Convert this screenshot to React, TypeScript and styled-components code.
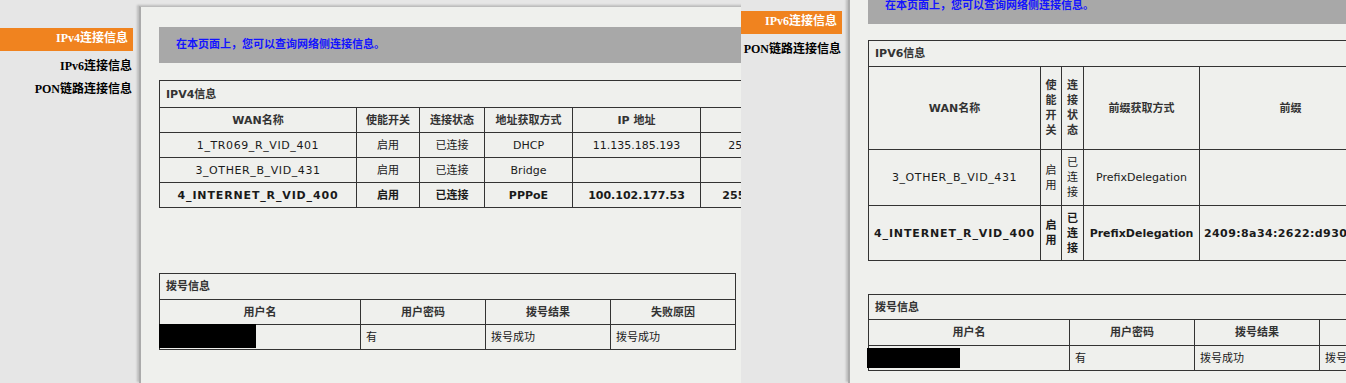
import React from 'react';
import styled, { createGlobalStyle } from 'styled-components';

const Global = createGlobalStyle`
  html, body { margin: 0; padding: 0; }
  body {
    background: #e6e6e6;
    font-family: "DejaVu Sans", "Noto Sans CJK SC", sans-serif;
  }
`;

const Screen = styled.div`
  display: flex;
  width: 1346px;
  height: 383px;
  overflow: hidden;
`;

const Shot = styled.section<{ $width?: number }>`
  display: flex;
  flex: ${p => (p.$width ? `0 0 ${p.$width}px` : '1 1 auto')};
  min-width: 0;
  height: 100%;
  overflow: hidden;
  background: #e6e6e6;
`;

const Sidebar = styled.nav<{ $width: number; $top: number }>`
  flex: 0 0 ${p => p.$width}px;
  box-sizing: border-box;
  padding-top: ${p => p.$top}px;
  display: flex;
  flex-direction: column;
  background: #e6e6e6;
`;

const NavItem = styled.div<{ $active?: boolean }>`
  width: calc(100% - 6px);
  height: 23px;
  line-height: 23px;
  box-sizing: border-box;
  text-align: right;
  white-space: nowrap;
  overflow: hidden;
  padding-right: ${p => (p.$active ? 5 : 1)}px;
  margin-bottom: ${p => (p.$active ? 5 : 0)}px;
  background: ${p => (p.$active ? '#f0831f' : 'transparent')};
  color: ${p => (p.$active ? '#ffffff' : '#000000')};
  font: bold 12px "Liberation Serif", "Noto Sans CJK SC", serif;
`;

const Frame = styled.main<{ $top: number }>`
  flex: 0 0 960px;
  margin-top: ${p => p.$top}px;
  padding-left: 18px;
  background: #eff0ed;
  border-left: 2px solid #ababab;
  border-top: ${p => (p.$top > 0 ? '1px solid #bdbdbd' : '0')};
  box-shadow: -2px -1px 2px rgba(0, 0, 0, 0.18);
`;

const Scroller = styled.div<{ $shift: number }>`
  display: flex;
  flex-direction: column;
  margin-top: ${p => p.$shift}px;
`;

const Banner = styled.div`
  width: 900px;
  height: 36px;
  line-height: 36px;
  padding-left: 17px;
  box-sizing: border-box;
  background: #a8a8a8;
  color: #1414ff;
  font-size: 11px;
  font-weight: bold;
  white-space: nowrap;
`;

const Table = styled.table<{ $width: number; $gap: number }>`
  border-collapse: collapse;
  table-layout: fixed;
  width: ${p => p.$width}px;
  margin-top: ${p => p.$gap}px;
  background: #eff0ed;
  font-size: 11px;
  line-height: 15px;
  color: #1a1a1a;
  border: 1px solid #333;
`;

const Col = styled.col<{ $w: number }>`
  width: ${p => p.$w}px;
`;

const Row = styled.tr<{ $h: number; $bold?: boolean }>`
  height: ${p => p.$h}px;
  font-weight: ${p => (p.$bold ? 'bold' : 'normal')};
`;

const TitleCell = styled.td`
  border: 1px solid #333;
  padding: 0 6px;
  text-align: left;
  font-weight: bold;
  color: #333;
  white-space: nowrap;
`;

const HeadCell = styled.th<{ $tight?: boolean }>`
  border: 1px solid #333;
  padding: ${p => (p.$tight ? '0' : '0 4px')};
  text-align: center;
  font-weight: bold;
  color: #333;
  overflow: hidden;
  word-break: break-all;
`;

const Cell = styled.td<{ $align?: 'left' | 'center'; $tight?: boolean; $nowrap?: boolean; $spacing?: number }>`
  border: 1px solid #333;
  padding: ${p => (p.$tight ? '0' : p.$align === 'left' ? '0 5px' : '0 4px')};
  text-align: ${p => p.$align || 'center'};
  overflow: hidden;
  white-space: ${p => (p.$nowrap ? 'nowrap' : 'normal')};
  word-break: break-all;
  letter-spacing: ${p => p.$spacing || 0}px;
`;

const RedactCell = styled.td`
  border: 1px solid #333;
  padding: 0;
  vertical-align: top;
`;

const Redact = styled.div<{ $w: number; $h: number; $dx: number; $dy: number }>`
  position: relative;
  width: ${p => p.$w}px;
  height: ${p => p.$h}px;
  margin-left: ${p => p.$dx}px;
  margin-top: ${p => p.$dy}px;
  background: #000;
`;

type ConnRow = { bold?: boolean; h: number; cells: string[] };

type ConnTable = {
  title: string;
  cols: number[];
  tight: number[];
  heads: string[];
  headH: number;
  titleH: number;
  rows: ConnRow[];
  gap: number;
  spacing: Record<number, [number, number]>;
};

const ConnectionTable: React.FC<{ t: ConnTable }> = ({ t }) => {
  const total = t.cols.reduce((a, b) => a + b, 0);
  return (
    <Table $width={total} $gap={t.gap}>
      <colgroup>
        {t.cols.map((w, i) => (
          <Col key={i} $w={w} />
        ))}
      </colgroup>
      <tbody>
        <Row $h={t.titleH}>
          <TitleCell colSpan={t.cols.length}>{t.title}</TitleCell>
        </Row>
        <Row $h={t.headH}>
          {t.heads.map((h, i) => (
            <HeadCell key={i} $tight={t.tight.includes(i)}>
              {h}
            </HeadCell>
          ))}
        </Row>
        {t.rows.map((r, ri) => (
          <Row key={ri} $h={r.h} $bold={r.bold}>
            {r.cells.map((c, i) => (
              <Cell
                key={i}
                $tight={t.tight.includes(i)}
                $nowrap={!t.tight.includes(i)}
                $spacing={t.spacing[i] ? t.spacing[i][r.bold ? 1 : 0] : 0}
              >
                {c}
              </Cell>
            ))}
          </Row>
        ))}
      </tbody>
    </Table>
  );
};

type Dial = {
  gap: number;
  titleH: number;
  headH: number;
  rowH: number;
  redact: { w: number; h: number; dx: number; dy: number };
};

const DialTable: React.FC<{ d: Dial }> = ({ d }) => {
  const cols = [201, 125, 125, 125];
  return (
    <Table $width={576} $gap={d.gap}>
      <colgroup>
        {cols.map((w, i) => (
          <Col key={i} $w={w} />
        ))}
      </colgroup>
      <tbody>
        <Row $h={d.titleH}>
          <TitleCell colSpan={4}>拨号信息</TitleCell>
        </Row>
        <Row $h={d.headH}>
          <HeadCell>用户名</HeadCell>
          <HeadCell>用户密码</HeadCell>
          <HeadCell>拨号结果</HeadCell>
          <HeadCell>失败原因</HeadCell>
        </Row>
        <Row $h={d.rowH}>
          <RedactCell>
            <Redact $w={d.redact.w} $h={d.redact.h} $dx={d.redact.dx} $dy={d.redact.dy} />
          </RedactCell>
          <Cell $align="left">有</Cell>
          <Cell $align="left">拨号成功</Cell>
          <Cell $align="left">拨号成功</Cell>
        </Row>
      </tbody>
    </Table>
  );
};

const ipv4: ConnTable = {
  title: 'IPV4信息',
  cols: [197, 63, 65, 88, 128, 150, 128, 128, 128],
  tight: [],
  heads: ['WAN名称', '使能开关', '连接状态', '地址获取方式', 'IP 地址', '子网掩码', '缺省网关', '首选DNS', '备用DNS'],
  headH: 25,
  titleH: 27,
  gap: 17,
  spacing: { 0: [0.6, 0.85], 5: [0, 0.15] },
  rows: [
    { h: 25, cells: ['1_TR069_R_VID_401', '启用', '已连接', 'DHCP', '11.135.185.193', '255.255.255.255', '11.135.185.1', '10.0.0.1', '10.0.0.2'] },
    { h: 25, cells: ['3_OTHER_B_VID_431', '启用', '已连接', 'Bridge', '', '', '', '', ''] },
    { h: 25, bold: true, cells: ['4_INTERNET_R_VID_400', '启用', '已连接', 'PPPoE', '100.102.177.53', '255.255.255.255', '100.102.0.1', '211.138.24.66', '211.138.30.66'] },
  ],
};

const ipv6: ConnTable = {
  title: 'IPV6信息',
  cols: [172, 21, 22, 116, 182, 120],
  tight: [1, 2],
  heads: ['WAN名称', '使能开关', '连接状态', '前缀获取方式', '前缀', '地址获取方式'],
  headH: 83,
  titleH: 26,
  gap: 16,
  spacing: { 0: [0.6, 0.85], 4: [0.4, 0.4] },
  rows: [
    { h: 56, cells: ['3_OTHER_B_VID_431', '启用', '已连接', 'PrefixDelegation', '', ''] },
    { h: 55, bold: true, cells: ['4_INTERNET_R_VID_400', '启用', '已连接', 'PrefixDelegation', '2409:8a34:2622:d930::/60', 'SLAAC'] },
  ],
};

const navItems = ['IPv4连接信息', 'IPv6连接信息', 'PON链路连接信息'];

export default function App() {
  return (
    <>
      <Global />
      <Screen>
        <Shot $width={741}>
          <Sidebar $width={139} $top={28}>
            {navItems.map((n, i) => (
              <NavItem key={n} $active={i === 0}>
                {n}
              </NavItem>
            ))}
          </Sidebar>
          <Frame $top={6}>
            <Scroller $shift={20}>
              <Banner>在本页面上，您可以查询网络侧连接信息。</Banner>
              <ConnectionTable t={ipv4} />
              <DialTable d={{ gap: 65, titleH: 26, headH: 25, rowH: 25, redact: { w: 97, h: 24, dx: -1, dy: -1 } }} />
            </Scroller>
          </Frame>
        </Shot>
        <Shot>
          <Sidebar $width={107} $top={11}>
            {navItems.slice(1).map((n, i) => (
              <NavItem key={n} $active={i === 0}>
                {n}
              </NavItem>
            ))}
          </Sidebar>
          <Frame $top={0}>
            <Scroller $shift={-12}>
              <Banner>在本页面上，您可以查询网络侧连接信息。</Banner>
              <ConnectionTable t={ipv6} />
              <DialTable d={{ gap: 33, titleH: 25, headH: 26, rowH: 25, redact: { w: 93, h: 20, dx: -2, dy: 2 } }} />
            </Scroller>
          </Frame>
        </Shot>
      </Screen>
    </>
  );
}
